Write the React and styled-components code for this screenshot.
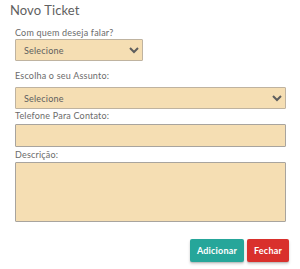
import React from 'react';
import styled, { createGlobalStyle } from 'styled-components';

const GlobalStyle = createGlobalStyle`
  html, body {
    margin: 0;
    padding: 0;
    background: #fff;
  }
  body {
    font-family: Lato, "Noto Sans", sans-serif;
  }
`;

const Modal = styled.div`
  width: 300px;
  height: 269px;
  box-sizing: border-box;
  padding: 0 14px 0 15px;
  display: flex;
  flex-direction: column;
`;

const Title = styled.h4`
  margin: 0 0 0 -5px;
  font-size: 13px;
  line-height: 20px;
  font-weight: 400;
  letter-spacing: 0.1px;
  color: #616161;
`;

const Field = styled.div`
  display: flex;
  flex-direction: column;
  margin-top: ${(p) => p.$top}px;
`;

const Label = styled.label`
  font-size: 9px;
  line-height: 12px;
  letter-spacing: 0.2px;
  color: #6b6b6b;
  margin-bottom: ${(p) => p.$gap}px;
`;

const Select = styled.select`
  width: ${(p) => p.$width || '100%'};
  height: 22px;
  box-sizing: border-box;
  background: #f5deb3;
  border: 1px solid #bfb3a0;
  border-radius: 1px;
  font-family: Lato, "Noto Sans", sans-serif;
  font-size: 9px;
  letter-spacing: 0.2px;
  color: #5e5e5e;
  padding: 0 2px 0 4px;
  outline: none;
`;

const Input = styled.input`
  width: 100%;
  height: 23px;
  box-sizing: border-box;
  background: #f5deb3;
  border: 1px solid #a8a49e;
  border-radius: 1px;
  outline: none;
`;

const TextArea = styled.textarea`
  width: 100%;
  height: 60px;
  box-sizing: border-box;
  background: #f5deb3;
  border: 1px solid #a8a49e;
  border-radius: 1px;
  resize: none;
  outline: none;
  display: block;
`;

const Actions = styled.div`
  display: flex;
  justify-content: flex-end;
  gap: 3px;
  margin-top: 17px;
  margin-right: -3px;
`;

const Button = styled.button`
  height: 23px;
  width: ${(p) => p.$width}px;
  border: none;
  border-radius: 2px;
  background: ${(p) => p.$bg};
  color: #fff;
  font-family: Lato, "Noto Sans", sans-serif;
  font-size: 9px;
  font-weight: 700;
  letter-spacing: 0.2px;
  padding: 0;
  box-shadow: 0 2px 3px rgba(0, 0, 0, 0.18), 0 1px 1px rgba(0, 0, 0, 0.12);
  cursor: pointer;
`;

export default function App() {
  return (
    <>
      <GlobalStyle />
      <Modal>
        <Title>Novo Ticket</Title>
        <Field $top={7}>
          <Label $gap={0}>Com quem deseja falar?</Label>
          <Select $width="128px" defaultValue="">
            <option value="">Selecione</option>
          </Select>
        </Field>
        <Field $top={9}>
          <Label $gap={5}>Escolha o seu Assunto:</Label>
          <Select defaultValue="">
            <option value="">Selecione</option>
          </Select>
        </Field>
        <Field $top={1}>
          <Label $gap={2}>Telefone Para Contato:</Label>
          <Input type="text" />
        </Field>
        <Field $top={2}>
          <Label $gap={1}>Descrição:</Label>
          <TextArea />
        </Field>
        <Actions>
          <Button $width={54} $bg="#26a69a">Adicionar</Button>
          <Button $width={42} $bg="#d9302c">Fechar</Button>
        </Actions>
      </Modal>
    </>
  );
}
